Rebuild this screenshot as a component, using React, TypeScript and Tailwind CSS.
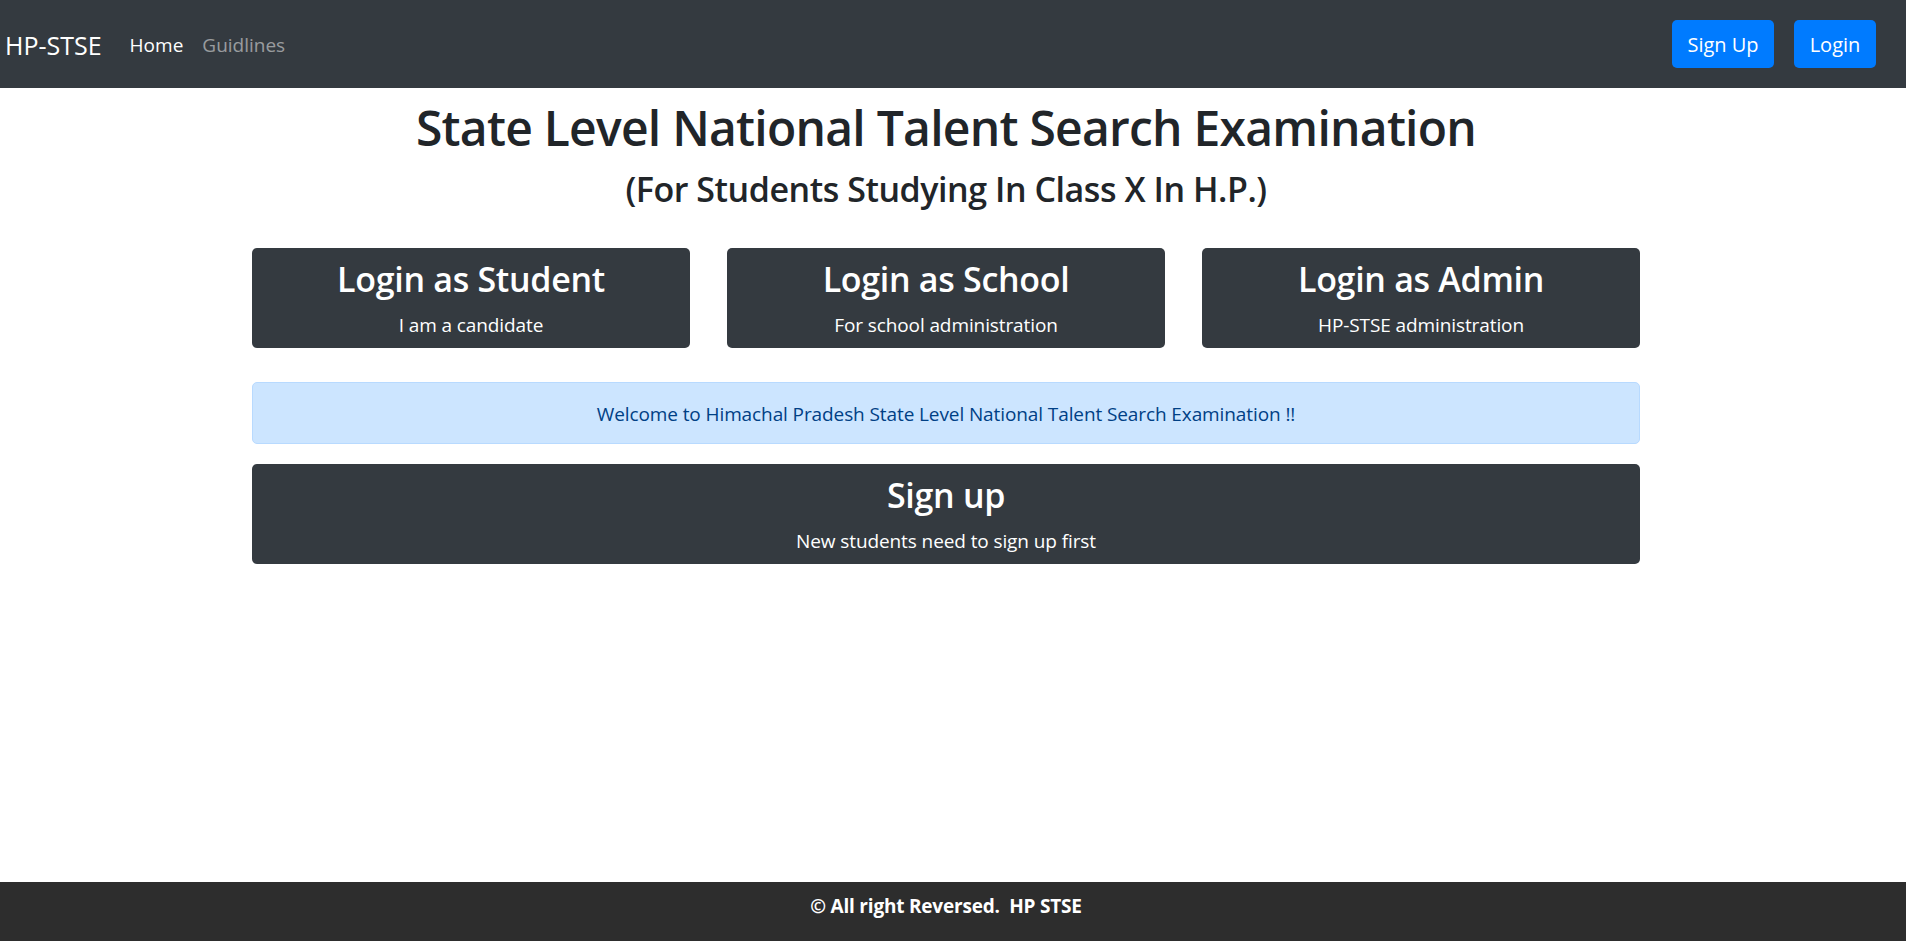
import React from 'react';

const font = { fontFamily: '"Open Sans", "Noto Sans", sans-serif' };

const LoginCard: React.FC<{ title: string; sub: string }> = ({ title, sub }) => (
    <a href="#" className="block rounded-[5px] bg-[#343a40] pt-[10px] pb-[8px] text-center text-white">
        <h3 className="mb-[10px] text-[34px] leading-[42px] font-semibold tracking-[-0.3px]">{title}</h3>
        <p className="text-[19px] leading-[30px] tracking-[-0.1px]">{sub}</p>
    </a>
);

const App: React.FC = () => {
    return (
        <div className="flex min-h-[941px] flex-col bg-white text-[#212529]" style={font}>
            <nav className="flex h-[88px] items-center bg-[#343a40] pl-[5px] pr-[30px]">
                <a href="#" className="pt-[1px] text-[25px] leading-[36px] text-white">HP-STSE</a>
                <ul className="ml-[18px] flex items-center pt-[2px] text-[19px] leading-[30px]">
                    <li><a href="#" className="block px-[10px] text-white">Home</a></li>
                    <li><a href="#" className="block px-[9px] text-white/50">Guidlines</a></li>
                </ul>
                <div className="ml-auto flex items-center gap-[20px]">
                    <button className="h-[48px] w-[102px] rounded-[5px] bg-[#007bff] pt-[2px] text-[20px] text-white">Sign Up</button>
                    <button className="h-[48px] w-[82px] rounded-[5px] bg-[#007bff] pt-[2px] text-[20px] text-white">Login</button>
                </div>
            </nav>

            <main className="ml-[252px] w-[1388px] flex-1">
                <div className="mt-[10px] text-center">
                    <h1 className="mb-[10px] text-[48px] leading-[60px] font-semibold tracking-[-0.75px]">State Level National Talent Search Examination</h1>
                    <h3 className="text-[34px] leading-[42px] font-semibold tracking-[-0.45px]">(For Students Studying In Class X In H.P.)</h3>
                </div>

                <div className="mt-[38px] grid grid-cols-3 gap-[37px]">
                    <LoginCard title="Login as Student" sub="I am a candidate" />
                    <LoginCard title="Login as School" sub="For school administration" />
                    <LoginCard title="Login as Admin" sub="HP-STSE administration" />
                </div>

                <div className="mt-[34px] flex h-[62px] items-center justify-center rounded-[5px] border border-[#b8daff] bg-[#cce5ff] pt-[2px] text-[19px] tracking-[-0.1px] text-[#004085]">
                    Welcome to Himachal Pradesh State Level National Talent Search Examination !!
                </div>

                <a href="#" className="mt-[20px] block rounded-[5px] bg-[#343a40] pt-[10px] pb-[8px] text-center text-white">
                    <h3 className="mb-[10px] text-[34px] leading-[42px] font-semibold tracking-[-0.3px]">Sign up</h3>
                    <p className="text-[19px] leading-[30px] tracking-[-0.1px]">New students need to sign up first</p>
                </a>
            </main>

            <footer className="h-[59px] bg-[#2d2d2d] pt-[9px] pr-[14px] text-center text-[19px] leading-[30px] font-bold tracking-[-0.2px] text-white">
                © All right Reversed.&nbsp; HP STSE
            </footer>
        </div>
    );
};

export default App;
